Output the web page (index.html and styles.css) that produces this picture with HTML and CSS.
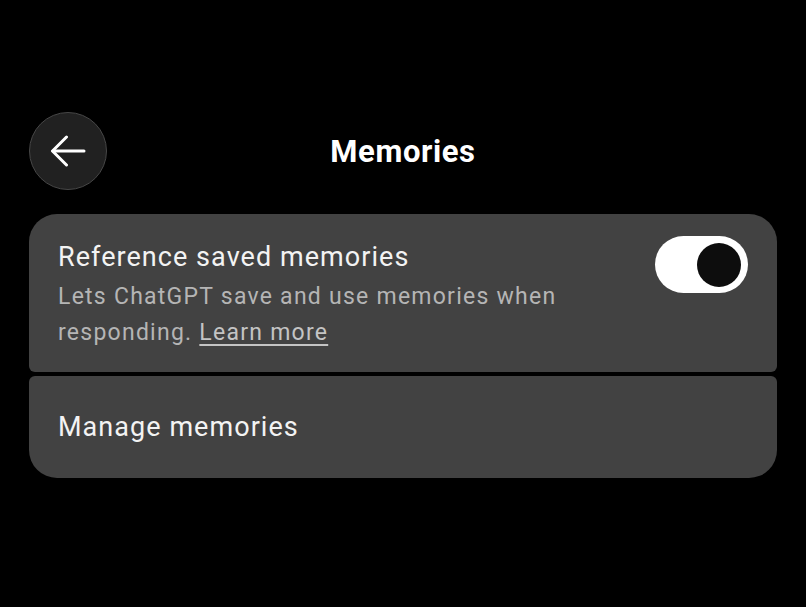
FILE: index.html
```html
<!DOCTYPE html>
<html lang="en">
<head>
  <meta charset="UTF-8">
  <title>Memories</title>
  <link rel="stylesheet" href="styles.css">
</head>
<body>
  <div class="page">
    <div class="header">
      <button class="back" aria-label="Back">
        <svg width="36" height="32" viewBox="0 0 36 32" fill="none" stroke="#fff" stroke-width="3" stroke-linecap="round" stroke-linejoin="round">
          <path d="M34 16H3"/>
          <path d="M16.5 2L2.5 16l14 14"/>
        </svg>
      </button>
      <h2 class="title">Memories</h2>
      <div></div>
    </div>

    <div class="card card-top">
      <div class="card-text">
        <div class="card-label">Reference saved memories</div>
        <div class="card-desc">Lets ChatGPT save and use memories when responding. <a href="#">Learn more</a></div>
      </div>
      <div class="toggle"><span class="knob"></span></div>
    </div>

    <div class="card card-bottom">
      <div class="card-label">Manage memories</div>
    </div>
  </div>
</body>
</html>
```

FILE: styles.css
```css
body {
  font-family: Roboto, "Noto Sans", Arial, sans-serif;
  background: #000;
  color: #f5f5f5;
  margin: 0;
}
.page {
  padding: 112px 29px 0;
}
.header {
  display: grid;
  grid-template-columns: 78px 1fr 78px;
  align-items: center;
  height: 78px;
  margin-bottom: 24px;
}
.back {
  width: 78px;
  height: 78px;
  border-radius: 50%;
  background: #212121;
  border: 1px solid #474747;
  display: flex;
  align-items: center;
  justify-content: center;
  padding: 0;
  cursor: pointer;
}
.title {
  margin: 0;
  text-align: center;
  font-size: 31px;
  font-weight: 700;
  letter-spacing: 0.6px;
  color: #fff;
}
.card {
  background: #424242;
  padding: 22px 29px 21px;
}
.card-top {
  display: flex;
  align-items: flex-start;
  gap: 24px;
  border-radius: 28px 28px 6px 6px;
  margin-bottom: 4px;
}
.card-bottom {
  padding: 34px 29px 34px;
  border-radius: 6px 6px 28px 28px;
}
.card-text {
  flex: 1;
  padding-top: 4px;
}
.card-label {
  font-size: 27px;
  line-height: 34px;
  letter-spacing: 1.05px;
  color: #f3f3f3;
}
.card-desc {
  margin-top: 5px;
  font-size: 23px;
  line-height: 36px;
  letter-spacing: 1.25px;
  color: #b5b5b5;
}
.card-desc a {
  color: #c4c4c4;
  text-decoration: underline;
  text-underline-offset: 4px;
}
.toggle {
  width: 93px;
  height: 57px;
  border-radius: 29px;
  background: #fff;
  display: flex;
  align-items: center;
  justify-content: flex-end;
  padding-right: 7px;
  box-sizing: border-box;
  flex-shrink: 0;
}
.knob {
  width: 44px;
  height: 44px;
  border-radius: 50%;
  background: #0d0d0d;
}
```
